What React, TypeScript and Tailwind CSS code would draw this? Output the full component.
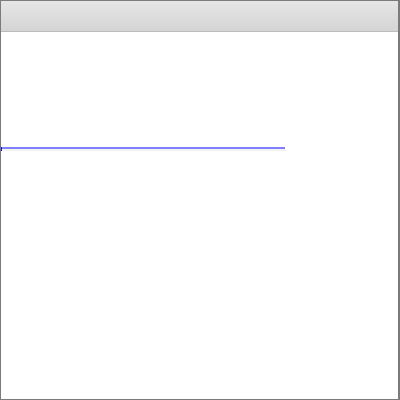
export default function App() {
  return (
    <div className="w-[400px] h-[400px] bg-white border border-r-2 border-[#7b7b7b] flex flex-col overflow-hidden" style={{ fontFamily: '"Liberation Sans", Arial, sans-serif' }}>
      <div className="h-[31px] shrink-0 bg-gradient-to-b from-[#e6e6e6] to-[#d4d4d4] border-b border-[#bcbcbc]" />
      <div className="flex-1 pt-[115px]">
        <div className="relative w-[284px]">
          <div className="h-[2px] bg-[#7f7fff]" />
          <div className="h-[2px] w-[285px] bg-[#f3f3f3]" />
          <div className="absolute left-0 top-0 w-[1px] h-[4px] bg-[#1a1acc]" />
        </div>
      </div>
    </div>
  );
}
